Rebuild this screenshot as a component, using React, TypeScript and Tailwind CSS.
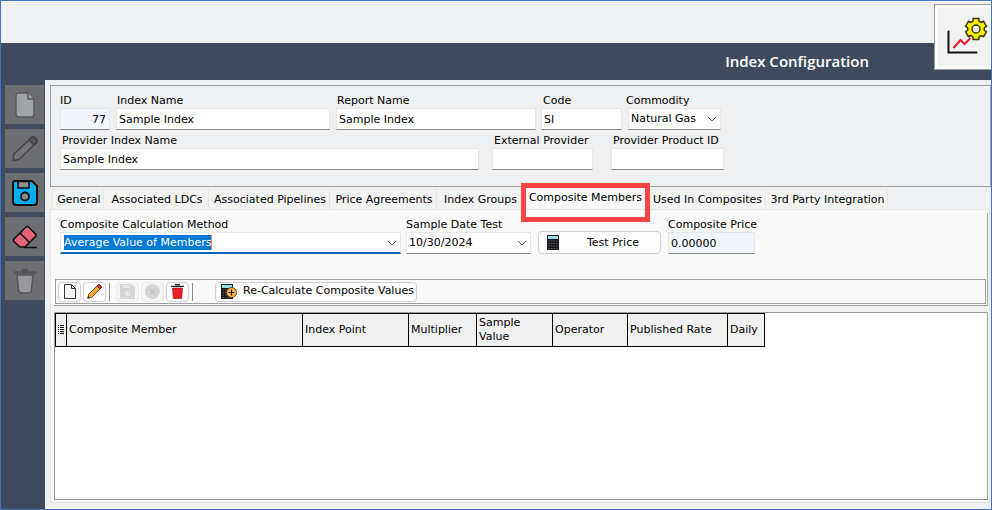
import { useState, type ReactNode } from "react";

const FONT = "font-['DejaVu_Sans',sans-serif]";
const BOX = "h-[22px] border border-[#e6e6e6] border-b-[#868686] text-[11px] leading-[16px] text-black outline-none";

function Chevron() {
  return (
    <svg width="10" height="6" viewBox="0 0 10 6" fill="none" className="shrink-0" aria-hidden="true">
      <path d="M1 1l4 4 4-4" stroke="#5c5c5c" strokeWidth="1" />
    </svg>
  );
}

function Field({ id, label, width, value = "", inset = "", readOnly = false, right = false }: {
  id: string; label: string; width: string; value?: string; inset?: string; readOnly?: boolean; right?: boolean;
}) {
  const [text, setText] = useState(value);
  return (
    <div className={`flex flex-col ${width}`}>
      <label htmlFor={id} className={`h-4 whitespace-nowrap leading-[18px] ${inset}`}>{label}</label>
      <input
        id={id}
        value={text}
        readOnly={readOnly}
        onChange={(e) => setText(e.target.value)}
        className={`${BOX} w-full ${right ? "px-[3px] text-right" : "px-[2px]"} ${readOnly ? "bg-[#f2f6fc]" : "bg-white"}`}
      />
    </div>
  );
}

function SideButton({ label, children }: { label: string; children: ReactNode }) {
  return (
    <button type="button" aria-label={label} className="flex h-[39px] w-[39px] items-center justify-center bg-[#6d6e71]">
      {children}
    </button>
  );
}

function ToolButton({ label, disabled = false, children }: { label: string; disabled?: boolean; children: ReactNode }) {
  return (
    <button
      type="button"
      aria-label={label}
      disabled={disabled}
      className={`flex h-5 w-[23px] items-center justify-center rounded-[4px] border ${disabled ? "border-[#ececec] bg-[#f5f5f5]" : "border-[#d0d0d0] bg-[#fdfdfd]"}`}
    >
      {children}
    </button>
  );
}

function Calculator({ plus = false }: { plus?: boolean }) {
  return (
    <svg width={plus ? 16 : 12} height="15" viewBox={plus ? "0 0 16 15" : "0 0 12 15"} className="shrink-0" aria-hidden="true">
      <rect x="0" y="0" width="12" height="15" fill="#17181c" />
      <rect x="1" y="1" width="10" height="3" fill="#9adbe8" />
      <path d="M1.5 6h9M1.5 8.5h9M1.5 11h9M1.5 13.5h9" stroke="#5b5d62" strokeWidth="1" strokeDasharray="1.5 1" />
      {plus && (
        <>
          <circle cx="10.5" cy="8.5" r="5" fill="#fbb040" stroke="#4a3413" strokeWidth="0.8" />
          <path d="M10.5 5.5v6M7.5 8.5h6" stroke="#231f20" strokeWidth="1.2" />
        </>
      )}
    </svg>
  );
}

const gearPoints = Array.from({ length: 6 }, (_, i) => {
  const a = (i * 2 * Math.PI) / 6 - Math.PI / 2;
  const p = (r: number, d: number) => `${(30 + r * Math.cos(a + d)).toFixed(2)},${(12 + r * Math.sin(a + d)).toFixed(2)}`;
  return [p(8.4, -0.36), p(10.8, -0.28), p(10.8, 0.28), p(8.4, 0.36)].join(" ");
}).join(" ");

function ChartGear() {
  return (
    <svg width="42" height="40" viewBox="0 0 42 40" fill="none" aria-hidden="true">
      <path d="M2.5 14.5v21h28" stroke="#111" strokeWidth="2" strokeLinecap="round" />
      <path d="M7.5 31l7-8 4 4 6-6" stroke="#ee1c25" strokeWidth="2" />
      <polygon points={gearPoints} fill="#fff200" stroke="#3b3800" strokeWidth="1.5" strokeLinejoin="round" />
      <circle cx="30" cy="12" r="4" fill="#f0f0f0" stroke="#3b3800" strokeWidth="1.5" />
    </svg>
  );
}

const tabs = [
  { name: "General", width: "w-[52px]" },
  { name: "Associated LDCs", width: "w-[105px]" },
  { name: "Associated Pipelines", width: "w-[121px]" },
  { name: "Price Agreements", width: "w-[107px]" },
  { name: "Index Groups", width: "w-[86px]" },
  { name: "Composite Members", width: "w-[125px]" },
  { name: "Used In Composites", width: "w-[118px]" },
  { name: "3rd Party Integration", width: "w-[122px]" },
];

const columns = [
  { name: "Composite Member", width: "w-[236px]" },
  { name: "Index Point", width: "w-[106px]" },
  { name: "Multiplier", width: "w-[68px]" },
  { name: "Sample Value", width: "w-[76px]" },
  { name: "Operator", width: "w-[75px]" },
  { name: "Published Rate", width: "w-[100px]" },
  { name: "Daily", width: "w-[37px]" },
];

function Sidebar() {
  return (
    <nav className="flex w-11 shrink-0 flex-col items-end gap-[5px] bg-[#3f4a5c] pt-[5px] pr-px">
      <SideButton label="New">
        <svg width="20" height="26" viewBox="0 0 20 26" aria-hidden="true">
          <path d="M3 1h10l6 6v15a3 3 0 0 1-3 3H4a3 3 0 0 1-3-3V4a3 3 0 0 1 2-3z" fill="#a2a3a5" stroke="#57585a" strokeWidth="1.4" />
          <path d="M13 1v6h6" fill="#a2a3a5" stroke="#57585a" strokeWidth="1.4" />
        </svg>
      </SideButton>
      <SideButton label="Edit">
        <svg width="26" height="26" viewBox="0 0 26 26" aria-hidden="true" strokeLinejoin="round">
          <path d="M1.5 24.5v-6L19 2a3 3 0 0 1 4.5 0l.5.5a3 3 0 0 1 0 4.5L7 23.5z" fill="#737477" stroke="#414246" strokeWidth="1.5" />
          <path d="M17 4l2-2a3 3 0 0 1 4.5 0l.5.5a3 3 0 0 1 0 4.5l-2 2z" fill="#55565a" stroke="#414246" strokeWidth="1.5" />
        </svg>
      </SideButton>
      <SideButton label="Save">
        <svg width="26" height="26" viewBox="0 0 26 26" aria-hidden="true" strokeLinejoin="round">
          <path d="M3 1h17l5 5v16a3 3 0 0 1-3 3H4a3 3 0 0 1-3-3V3a2 2 0 0 1 2-2z" fill="#00adef" stroke="#111" strokeWidth="2" />
          <path d="M6 1.5h11v6.5H6z" fill="#8b8c8f" stroke="#111" strokeWidth="1.6" />
          <circle cx="13" cy="16.5" r="4" fill="#8b8c8f" stroke="#111" strokeWidth="1.8" />
        </svg>
      </SideButton>
      <SideButton label="Clear">
        <svg width="26" height="24" viewBox="0 0 26 24" aria-hidden="true" strokeLinejoin="round">
          <path d="M2 14L14 2a2 2 0 0 1 2.5 0l7 7a2 2 0 0 1 0 2.5L13 22H8l-6-5.500a2 2 0 0 1 0-2.500z" fill="#e4627a" stroke="#111" strokeWidth="1.6" />
          <path d="M8 8l9.5 9.5M12 22.5h13" stroke="#111" strokeWidth="1.6" />
        </svg>
      </SideButton>
      <SideButton label="Delete">
        <svg width="22" height="26" viewBox="0 0 22 26" aria-hidden="true">
          <path d="M3 7h16l-1.5 15a3 3 0 0 1-3 3h-7a3 3 0 0 1-3-3z" fill="#97989a" stroke="#55565a" strokeWidth="1.6" />
          <path d="M0 4.5h22M8 2h6" stroke="#55565a" strokeWidth="2.4" />
        </svg>
      </SideButton>
    </nav>
  );
}

function IndexDetails() {
  return (
    <section className="ml-[5px] flex h-[102px] flex-col gap-[2px] border border-[#9da0a0] pt-[6px] pl-[9px]">
      <div className="flex">
        <Field id="index-id" label="ID" width="w-[50px]" value="77" readOnly right />
        <Field id="index-name" label="Index Name" width="ml-[6px] w-[214px]" value="Sample Index" inset="pl-px" />
        <Field id="report-name" label="Report Name" width="ml-[6px] w-[200px]" value="Sample Index" inset="pl-px" />
        <Field id="code" label="Code" width="ml-[5px] w-[81px]" value="SI" inset="pl-[2px]" />
        <div className="ml-[6px] flex w-[93px] flex-col">
          <label htmlFor="commodity" className="-ml-[2px] h-4 leading-[18px]">Commodity</label>
          <div className={`${BOX} flex items-center bg-white pr-[3px] pl-[2px]`}>
            <select id="commodity" className="min-w-0 flex-1 appearance-none bg-white outline-none">
              <option>Natural Gas</option>
            </select>
            <Chevron />
          </div>
        </div>
      </div>
      <div className="flex">
        <Field id="provider-name" label="Provider Index Name" width="w-[419px]" value="Sample Index" inset="pl-[2px]" />
        <Field id="external-provider" label="External Provider" width="ml-[13px] w-[101px]" inset="pl-[2px]" />
        <Field id="product-id" label="Provider Product ID" width="ml-[18px] w-[113px]" inset="pl-[2px]" />
      </div>
    </section>
  );
}

function TabStrip() {
  return (
    <div role="tablist" className="ml-[7px] flex h-[22px] items-end">
      {tabs.map((t) => {
        const active = t.name === "Composite Members";
        return active ? (
          <div key={t.name} className={`relative flex h-[22px] ${t.width}`}>
            <button type="button" role="tab" aria-selected className="w-full bg-[#f9f9f9] leading-[18px] whitespace-nowrap">{t.name}</button>
            <div className="pointer-events-none absolute -top-1 -right-[2px] -left-[2px] h-[39px] border-[5px] border-[#ff4343]" />
          </div>
        ) : (
          <button key={t.name} type="button" role="tab" aria-selected={false} className={`h-5 border-t border-r border-[#e5e5e5] bg-[#f3f3f3] pt-px pl-[2px] leading-4 whitespace-nowrap first:border-l ${t.width}`}>
            {t.name}
          </button>
        );
      })}
    </div>
  );
}

function CompositeForm() {
  return (
    <div className="flex h-[66px] pt-[3px] pl-[6px]">
      <div className="flex w-[341px] flex-col">
        <label htmlFor="method" className="h-4 leading-[18px]">Composite Calculation Method</label>
        <div className="flex h-[22px] items-center justify-between border border-b-2 border-[#e6e6e6] border-b-[#0067c0] bg-white pr-[3px] pl-[3px]">
          <select id="method" className="field-sizing-content h-[15px] appearance-none border-r border-[#f0883e] bg-[#0078d7] leading-[15px] text-white outline-none">
            <option>Average Value of Members</option>
          </select>
          <Chevron />
        </div>
      </div>
      <div className="ml-[5px] flex w-[125px] flex-col">
        <label htmlFor="sample-date" className="h-4 leading-[18px]">Sample Date Test</label>
        <div className={`${BOX} flex items-center bg-white pr-[3px] pl-[2px]`}>
          <input id="sample-date" defaultValue="10/30/2024" className="min-w-0 flex-1 bg-white outline-none" />
          <button type="button" aria-label="Open calendar"><Chevron /></button>
        </div>
      </div>
      <button type="button" className="mt-[15px] ml-[7px] flex h-[23px] w-[123px] items-center rounded-[4px] border border-[#d0d0d0] bg-[#fdfdfd] pl-2 leading-[18px]">
        <Calculator />
        <span className="flex-1 pt-px pr-[21px] text-right">Test Price</span>
      </button>
      <Field id="composite-price" label="Composite Price" width="ml-[7px] w-[87px]" value="0.00000" readOnly />
    </div>
  );
}

function Toolbar() {
  return (
    <div role="toolbar" className="mr-px mb-px ml-px flex h-[25px] items-center border border-[#9da0a0] pl-[2px]">
      <div className="flex gap-[2px]">
        <ToolButton label="New member">
          <svg width="12" height="15" viewBox="0 0 12 15" aria-hidden="true"><path d="M.5.5h7l4 4v10H.5zM7.5.5v4h4" fill="#f5f5f5" stroke="#333" /></svg>
        </ToolButton>
        <ToolButton label="Edit member">
          <svg width="15" height="15" viewBox="0 0 15 15" aria-hidden="true">
            <path d="M.7 14.3l1-4L11 1a1.5 1.5 0 0 1 2 0l1 1a1.5 1.5 0 0 1 0 2L4.7 13.3z" fill="#fbab35" stroke="#5a3412" strokeWidth=".9" />
            <path d="M10 2l1-1a1.5 1.5 0 0 1 2 0l1 1a1.5 1.5 0 0 1 0 2l-1 1z" fill="#e0263c" stroke="#5a1220" strokeWidth=".7" />
            <path d="M.7 14.3l.6-2.2 1.6 1.6z" fill="#222" />
          </svg>
        </ToolButton>
      </div>
      <div className="mx-[3px] h-[18px] w-px bg-[#8c8c8c]" />
      <div className="ml-[3px] flex gap-[2px]">
        <ToolButton label="Save member" disabled>
          <svg width="15" height="15" viewBox="0 0 15 15" aria-hidden="true"><path d="M1 0h11l3 3v12H0V1z" fill="#d6d6d6" /><path d="M3 1h7v3H3z" fill="#e6e6e6" /><circle cx="7.5" cy="9.5" r="2.5" fill="#e6e6e6" /></svg>
        </ToolButton>
        <ToolButton label="Cancel" disabled>
          <svg width="15" height="15" viewBox="0 0 15 15" aria-hidden="true"><circle cx="7.5" cy="7.5" r="7.5" fill="#d4d4d4" /><path d="M5 5l5 5M10 5l-5 5" stroke="#c3c3c3" strokeWidth="1.5" /></svg>
        </ToolButton>
        <ToolButton label="Delete member">
          <svg width="13" height="15" viewBox="0 0 13 15" aria-hidden="true"><path d="M1.5 4h10l-.8 10.5H2.3z" fill="#ee1c25" stroke="#7a0f14" strokeWidth=".6" /><path d="M0 2.3h13M4 .6h5" stroke="#222" strokeWidth="1.3" /></svg>
        </ToolButton>
      </div>
      <div className="mx-[3px] h-[18px] w-px bg-[#8c8c8c]" />
      <button type="button" className="ml-[19px] flex h-5 w-[202px] items-center gap-[6px] rounded-[4px] border border-[#d0d0d0] bg-[#fdfdfd] pl-[5px] whitespace-nowrap">
        <Calculator plus />
        Re-Calculate Composite Values
      </button>
    </div>
  );
}

function MembersTable() {
  return (
    <div className="flex flex-1 flex-col bg-[#efefef] pt-[6px]">
      <div className="flex-1 border border-[#9a9a9a] bg-white">
        <table className="w-[710px] table-fixed border-collapse text-left">
          <thead>
            <tr className="h-[33px] bg-[#f0f0f0]">
              <th scope="col" aria-label="Row selector" className="w-[11px] border border-black p-0">
                <svg width="9" height="11" viewBox="0 0 9 11" aria-hidden="true"><path d="M2 .5h1M4 .5h4M2 2.5h1M4 2.5h4M2 4.5h1M4 4.5h4M2 6.5h1M4 6.5h4M2 8.5h1M4 8.5h4" stroke="#111" /></svg>
              </th>
              {columns.map((c) => (
                <th key={c.name} scope="col" className={`border border-black p-0 pl-[2px] leading-[14px] font-normal ${c.width}`}>{c.name}</th>
              ))}
            </tr>
          </thead>
        </table>
      </div>
    </div>
  );
}

export default function App() {
  return (
    <div className={`relative flex min-h-screen flex-col border border-[#4472c4] bg-[#eff0f2] text-[11px] text-black ${FONT}`}>
      <div className="h-[42px] border-t border-white" />
      <header className="flex h-[37px] items-center justify-end bg-[#3f4a5c] pr-[122px]">
        <h1 className="font-['Open_Sans',sans-serif] text-[15px] font-semibold text-white">Index Configuration</h1>
      </header>
      <button type="button" aria-label="Index settings" className="absolute top-[3px] right-0 flex h-[66px] w-[57px] items-center border border-r-0 border-[#9d9d9d] bg-white py-[3px] pl-[3px]">
        <span className="flex h-full flex-1 items-center overflow-hidden bg-[#f2f2f2] pl-[8px]"><ChartGear /></span>
      </button>
      <div className="flex flex-1">
        <Sidebar />
        <main className="flex min-w-0 flex-1 flex-col pt-[5px]">
          <IndexDetails />
          <TabStrip />
          <div role="tabpanel" className="mr-px mb-[6px] ml-[5px] flex flex-1 flex-col border border-[#e5e5e5] bg-[#f9f9f9] pt-[3px] pr-px pb-[2px] pl-[3px]">
            <div className="border-r border-b border-[#9da0a0]">
              <CompositeForm />
              <Toolbar />
            </div>
            <MembersTable />
          </div>
        </main>
      </div>
    </div>
  );
}
